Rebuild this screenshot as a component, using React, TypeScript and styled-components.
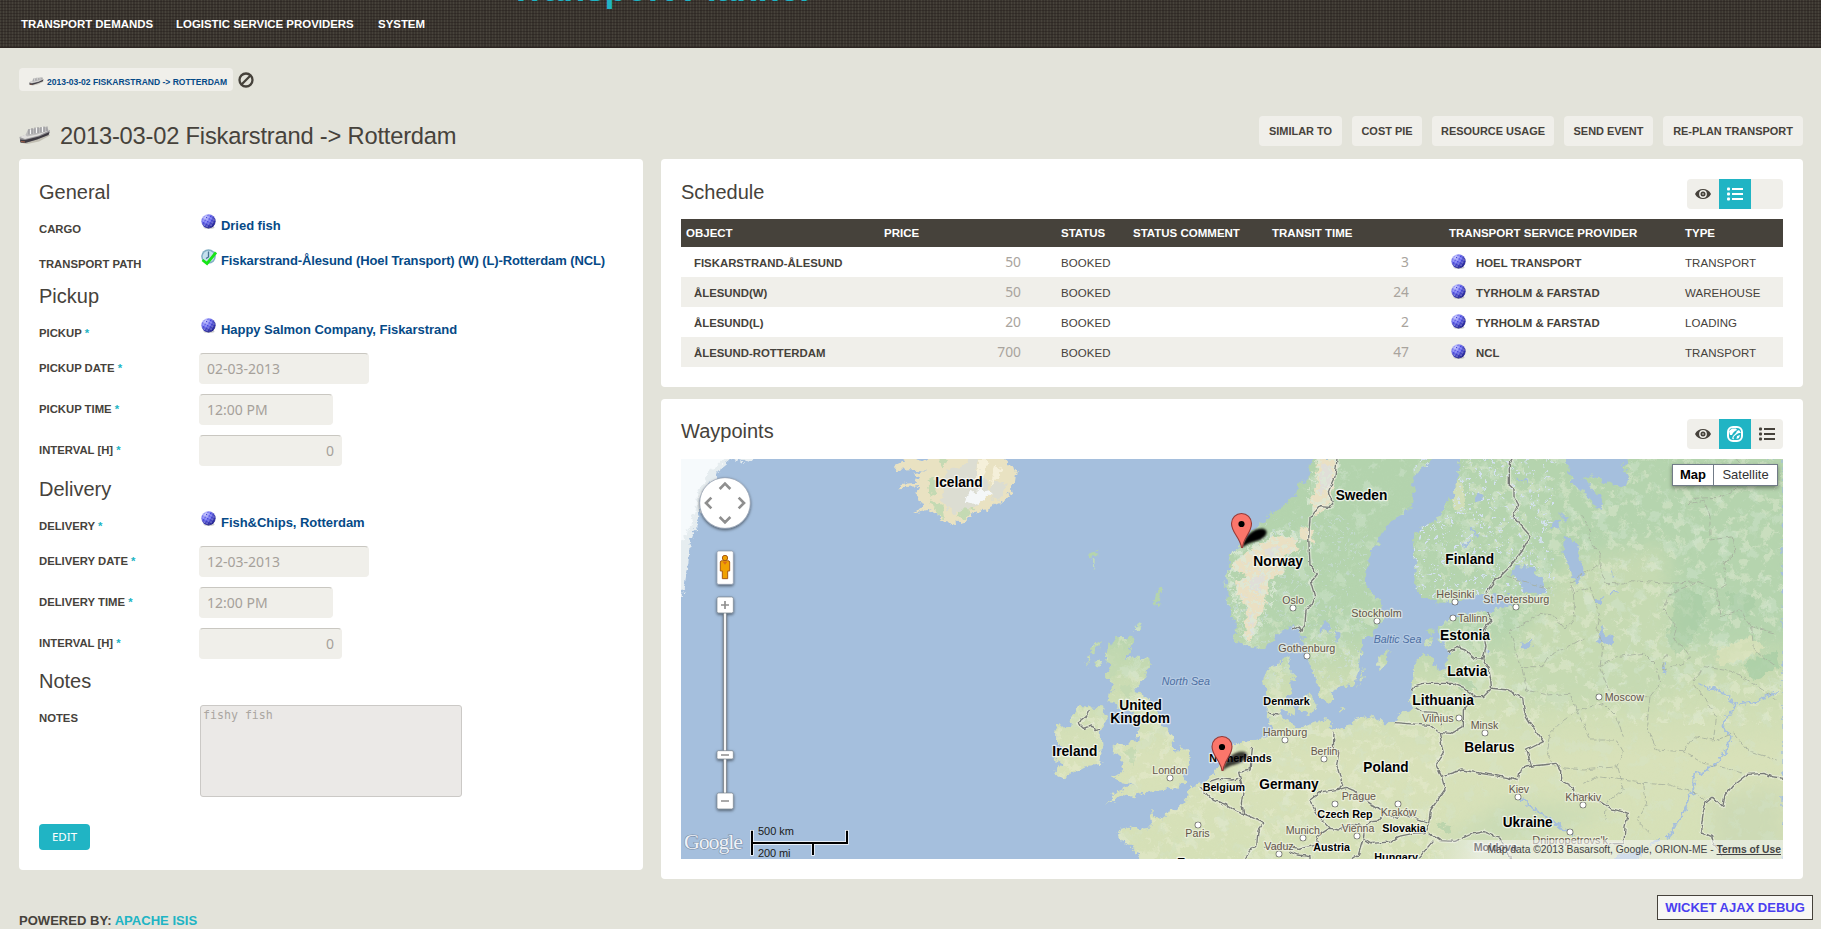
import React from 'react';
import styled, { createGlobalStyle } from 'styled-components';

const GlobalStyle = createGlobalStyle`
  * { box-sizing: border-box; }
  html, body { margin: 0; padding: 0; }
  body {
    background: #e3e3da;
    color: #46423b;
    font-family: "Liberation Sans", Arial, sans-serif;
    overflow: hidden;
  }
`;

const Page = styled.div`
  position: relative;
  width: 1821px;
  height: 929px;
  overflow: hidden;
`;

const Header = styled.header`
  position: relative;
  height: 48px;
  background-color: #3b3630;
  background-image:
    repeating-linear-gradient(0deg, rgba(30, 22, 20, 0.36) 0 1px, transparent 1px 3px),
    repeating-linear-gradient(90deg, rgba(100, 96, 84, 0.3) 0 1px, transparent 1px 3px),
    repeating-linear-gradient(90deg, rgba(20, 16, 14, 0.08) 0 3px, transparent 3px 7px);
  border-bottom: 1px solid #2d2622;
  overflow: hidden;
`;

const Brand = styled.div`
  position: absolute;
  left: 510px;
  top: -31px;
  font-size: 36px;
  line-height: 40px;
  font-weight: bold;
  letter-spacing: -0.3px;
  color: #20b4c4;
  white-space: nowrap;
`;

const Nav = styled.nav`
  display: flex;
  gap: 23px;
  padding: 16px 0 0 21px;
`;

const NavItem = styled.a<{ $w: number }>`
  width: ${(p) => p.$w}px;
  font-size: 11.45px;
  line-height: 16px;
  font-weight: bold;
  color: #fff;
  white-space: nowrap;
`;

const Crumbs = styled.div`
  display: flex;
  align-items: center;
  gap: 5px;
  padding: 20px 0 0 19px;
`;

const Crumb = styled.a`
  display: flex;
  align-items: center;
  gap: 3px;
  width: 214px;
  height: 23px;
  padding: 4px 0 0 10px;
  border-radius: 4px;
  background: #f0efea;
  color: #064a87;
  font-size: 8.52px;
  font-weight: bold;
  white-space: nowrap;
`;

const TitleBar = styled.div`
  display: flex;
  justify-content: space-between;
  height: 68px;
  padding: 25px 18px 0 19px;
`;

const Title = styled.h1`
  display: flex;
  gap: 9px;
  margin: 6px 0 0;
  font-size: 23.7px;
  letter-spacing: -0.2px;
  line-height: 28px;
  font-weight: normal;
  svg { margin-top: 4px; }
`;

const Actions = styled.div`
  display: flex;
  gap: 10px;
`;

const ActionButton = styled.button<{ $w: number }>`
  width: ${(p) => p.$w}px;
  height: 30px;
  padding: 0;
  border: 0;
  border-radius: 4px;
  background: #f0efea;
  color: #46423b;
  font: bold 10.95px/30px "Liberation Sans", Arial, sans-serif;
  white-space: nowrap;
`;

const Columns = styled.main`
  display: grid;
  grid-template-columns: 624px 1142px;
  column-gap: 18px;
  padding-left: 19px;
  align-items: start;
`;

const Panel = styled.section<{ $h: number; $top: number }>`
  height: ${(p) => p.$h}px;
  padding: ${(p) => p.$top}px 20px 0;
  border-radius: 4px;
  background: #fff;
`;

const RightColumn = styled.div`
  display: flex;
  flex-direction: column;
  gap: 12px;
`;

const Heading = styled.h2<{ $gap?: number; $line?: number }>`
  height: 34px;
  margin: ${(p) => p.$gap || 0}px 0 0;
  font-size: 20px;
  line-height: ${(p) => p.$line || 32}px;
  font-weight: normal;
`;

const Row = styled.div<{ $h: number }>`
  display: grid;
  grid-template-columns: 160px 1fr;
  height: ${(p) => p.$h}px;
`;

const Label = styled.label`
  padding-top: 11px;
  font-size: 11.3px;
  line-height: 16px;
  font-weight: bold;
  white-space: nowrap;
  span { color: #20b4c4; }
`;

const LinkValue = styled.a<{ $tight?: boolean }>`
  display: flex;
  gap: ${(p) => (p.$tight ? 4 : 5)}px;
  padding: 4px 0 0 2px;
  font-size: 13px;
  letter-spacing: ${(p) => (p.$tight ? '-0.11px' : '-0.04px')};
  line-height: 16px;
  font-weight: bold;
  color: #064a87;
  white-space: nowrap;
  span { padding-top: 4px; }
`;

const Field = styled.input<{ $w: number; $right?: boolean }>`
  width: ${(p) => p.$w}px;
  height: 31px;
  margin-top: 4px;
  padding: 0 7px;
  border: 1px solid #f0efea;
  border-top-color: #c9c7c1;
  border-radius: 4px;
  background: #f0efea;
  color: #a6a19a;
  text-align: ${(p) => (p.$right ? 'right' : 'left')};
  font: 14px/28px "Noto Sans", sans-serif;
`;

const Notes = styled.textarea`
  width: 262px;
  height: 92px;
  margin: 6px 0 0 1px;
  padding: 2px;
  border: 1px solid #cbc9c6;
  border-radius: 3px;
  background: #ebe9e7;
  color: #aaa6a1;
  resize: none;
  font: 11.6px/14px "DejaVu Sans Mono", monospace;
`;

const EditButton = styled.button`
  display: block;
  width: 51px;
  height: 26px;
  padding: 0;
  border: 0;
  border-radius: 4px;
  background: #20b4c4;
  color: #fff;
  font: 11.5px/26px "Noto Sans", sans-serif;
`;

const PanelHead = styled.div`
  display: flex;
  justify-content: space-between;
  height: 43px;
`;

const Toggle = styled.div`
  display: flex;
  width: 96px;
  height: 30px;
  margin-top: 3px;
  border-radius: 4px;
  background: #f0efea;
  overflow: hidden;
`;

const ToggleItem = styled.span<{ $on?: boolean }>`
  display: flex;
  align-items: center;
  justify-content: center;
  width: 32px;
  color: ${(p) => (p.$on ? '#fff' : '#46423b')};
  background: ${(p) => (p.$on ? '#20b4c4' : 'transparent')};
`;

const TableRow = styled.div<{ $kind?: 'head' | 'alt' }>`
  display: grid;
  grid-template-columns: 198px 177px 72px 139px 177px 236px 103px;
  height: ${(p) => (p.$kind === 'head' ? 28 : 30)}px;
  background: ${(p) => (p.$kind === 'head' ? '#46423b' : p.$kind === 'alt' ? '#f0efea' : '#fff')};
`;

const HeadCell = styled.div`
  padding-left: 5px;
  font-size: 11.5px;
  line-height: 28px;
  font-weight: bold;
  color: #fff;
  white-space: nowrap;
`;

const Cell = styled.div<{ $bold?: boolean; $pad?: number }>`
  display: flex;
  gap: 10px;
  padding: 1px 0 0 ${(p) => p.$pad ?? 5}px;
  font-size: ${(p) => (p.$bold ? 11.38 : 11.5)}px;
  line-height: ${(p) => (p.$bold ? 31 : 30)}px;
  letter-spacing: ${(p) => (p.$bold ? 'normal' : '0.05px')};
  font-weight: ${(p) => (p.$bold ? 'bold' : 'normal')};
  white-space: nowrap;
  svg { margin-top: 6px; }
`;

const NumberCell = styled.div`
  padding-right: 35px;
  text-align: right;
  color: #a9a49d;
  font: 13.8px/29px "Noto Sans", sans-serif;
`;

const MapFrame = styled.div`
  position: relative;
  width: 1102px;
  height: 400px;
  overflow: hidden;
  background: #a5bfdd;
`;

const MapType = styled.div`
  position: absolute;
  top: 5px;
  right: 5px;
  display: flex;
  width: 106px;
  height: 22px;
  border: 1px solid #717b87;
  background: #fff;
  box-shadow: 0 2px 4px rgba(0, 0, 0, 0.4);
  font-size: 13px;
  line-height: 19px;
  text-align: center;
  color: #333;
  b { width: 41px; border-right: 1px solid #717b87; color: #000; }
  span { flex: 1; }
`;

const Attribution = styled.div`
  position: absolute;
  right: 0;
  bottom: 0;
  width: 355px;
  height: 19px;
  padding-right: 2px;
  background: linear-gradient(90deg, rgba(245, 245, 245, 0), rgba(245, 245, 245, 0.55) 50px);
  font-size: 10.3px;
  line-height: 19px;
  text-align: right;
  color: #444;
  white-space: nowrap;
  b { text-decoration: underline; }
`;

const Footer = styled.footer`
  margin-top: -9px;
  padding: 42px 0 0 19px;
  font-size: 13.05px;
  line-height: 17px;
  font-weight: bold;
  a { color: #20b4c4; }
`;

const DebugLink = styled.a`
  position: absolute;
  right: 8px;
  bottom: 9px;
  width: 156px;
  height: 25px;
  border: 1px solid #46423b;
  background: #f7f7f4;
  color: #4a3ff0;
  font-size: 13px;
  line-height: 23px;
  font-weight: bold;
  text-align: center;
  white-space: nowrap;
`;

const Ship = ({ w }: { w: number }) => (
  <svg width={w} height={(w * 18) / 32} viewBox="0 0 32 18">
    <path d="M1 16.500 L30 8.500 L31 9.500 L20 15.500 L8 18Z" fill="#a5a091" opacity=".55" />
    <path d="M.5 11 L8 8.500 L26 4.500 L31 4 L30 8.500 L18 13.500 L6 17 L1.500 16.500 Z" fill="#98979a" />
    <path d="M1 13.500 L6 14 L20 10.500 L30.500 6 L29.500 9 L18 13.500 L6 17 L1.500 16.500Z" fill="#3f3b42" />
    <path d="M.5 11 L8 8 L28 4 L31 4 L20 9.500 L6 13Z" fill="#e0dedc" />
    <path d="M6.500 9 L9 3.500 L27 .8 L30 4.500 L18 8.500 L8 10.500Z" fill="#bdbcbc" />
    <path d="M10 8.500 V3 M13 8 V2 M16 7.500 V1.500 M19 7 V1 M22 6.500 V1 M25 6 V.5 M28 5 V.5" stroke="#8d8d92" strokeWidth="1" />
    <path d="M11.500 8 V3.500 M17.500 7 V2 M23.500 6 V1" stroke="#f6f6f6" strokeWidth="1.200" />
    <path d="M2 15.500 L6 16" stroke="#a8644a" strokeWidth="1.200" />
  </svg>
);

const Ball = () => (
  <svg width="15" height="15" viewBox="0 0 15 15">
    <defs>
      <radialGradient id="ball" cx="30%" cy="22%" r="82%">
        <stop offset="0" stopColor="#d6d6ff" />
        <stop offset=".45" stopColor="#7474f2" />
        <stop offset="1" stopColor="#1b1b7c" />
      </radialGradient>
      <pattern id="net" width="3" height="3" patternUnits="userSpaceOnUse" patternTransform="rotate(28)">
        <rect width="1.200" height="1.200" fill="#2424cc" />
        <rect x="1.500" y="1.500" width="1.300" height="1.300" fill="#b9b9ff" opacity=".9" />
      </pattern>
    </defs>
    <ellipse cx="8" cy="13.600" rx="5.500" ry="1.300" fill="#999" opacity=".5" />
    <circle cx="7.500" cy="7.300" r="7.100" fill="url(#ball)" />
    <circle cx="7.500" cy="7.300" r="6.500" fill="url(#net)" opacity=".8" />
  </svg>
);

const ClockCheck = () => (
  <svg width="16" height="17" viewBox="0 0 16 17">
    <circle cx="7.500" cy="7.500" r="7.300" fill="#82afc4" />
    <circle cx="7.500" cy="7.500" r="5.800" fill="#c5e0ee" />
    <path d="M7.500 2.500 V8 L5 9.500" fill="none" stroke="#44718f" strokeWidth="1.300" />
    <path d="M1.500 11 L6 14.500 L15 3.500" fill="none" stroke="#16e416" strokeWidth="2.800" />
  </svg>
);

const Ban = () => (
  <svg width="16" height="16" viewBox="0 0 16 16" fill="none" stroke="#46423b" strokeWidth="2.300">
    <circle cx="8" cy="8" r="6.500" />
    <path d="M3.500 12.500 L12.500 3.500" />
  </svg>
);

const Eye = () => (
  <svg width="16" height="12" viewBox="0 0 16 12">
    <path d="M0 6 C3 -.8 13 -.8 16 6 C13 12.800 3 12.800 0 6Z" fill="#46423b" />
    <circle cx="8" cy="6" r="3.900" fill="#f0efea" />
    <circle cx="8" cy="6" r="2.500" fill="#46423b" />
    <circle cx="8" cy="6" r=".8" fill="#f0efea" />
  </svg>
);

const ListIcon = () => (
  <svg width="16" height="14" viewBox="0 0 16 14" fill="currentColor">
    {[0.5, 5.5, 10.5].map((y) => (
      <g key={y}>
        <rect x="0" y={y} width="3" height="3" rx="1" />
        <rect x="5" y={y + 0.5} width="11" height="2" />
      </g>
    ))}
  </svg>
);

const GlobeIcon = () => (
  <svg width="16" height="16" viewBox="0 0 16 16">
    <rect x="1" y="1" width="14" height="14" rx="5" fill="none" stroke="#fff" strokeWidth="2" />
    <path d="M2 5 L5 2.500 L9 2.500 L10 4 L8 5 L6 7 L5 9 L3 9Z M10 5 L12 4 L14 7 L12 7 L10 8 L8 9.500 L6.500 11 L7 13.500 L5 12.500 L6 10 L9 7Z M10 10 L13 9 L12 12 L9.500 13Z" fill="#fff" />
  </svg>
);

const MAINLAND =
  'M2200 20 L2200 1240 L280 1240 L250 1195 L212 1175 L200 1140 L240 1130 L272 1138 L308 1130 L300 1082 L316 1100 L342 1106 L346 1086 L386 1075 L415 1040 L418 1012 L450 1004 L474 988 L492 974 L515 930 L540 892 L562 880 L605 868 L640 862 L670 850 L665 826 L650 800 L655 770 L645 740 L640 690 L650 658 L680 647 L700 628 L722 618 L718 665 L737 680 L720 700 L725 725 L708 745 L725 765 L690 782 L700 808 L718 820 L735 838 L762 830 L792 820 L825 808 L850 815 L835 832 L862 840 L892 825 L932 802 L962 797 L1000 817 L1035 815 L1050 790 L1082 788 L1085 700 L1090 660 L1102 630 L1130 612 L1150 630 L1165 662 L1190 660 L1197 610 L1190 582 L1170 575 L1165 535 L1178 520 L1210 502 L1250 495 L1290 485 L1320 488 L1350 472 L1395 468 L1385 438 L1335 435 L1300 428 L1260 440 L1215 455 L1170 458 L1120 440 L1102 418 L1094 395 L1100 365 L1092 315 L1086 280 L1098 250 L1120 232 L1155 212 L1180 175 L1205 140 L1225 90 L1225 20Z';
const SCANDINAVIA =
  'M798 20 L776 48 L782 80 L742 106 L738 132 L700 168 L665 192 L640 217 L612 240 L592 264 L568 288 L540 312 L530 332 L542 352 L526 385 L532 420 L534 468 L546 500 L560 528 L553 560 L576 585 L612 597 L642 590 L668 570 L692 546 L716 532 L734 522 L748 542 L752 562 L768 592 L776 640 L792 676 L806 702 L808 745 L832 760 L850 750 L848 722 L872 708 L910 712 L926 655 L932 600 L940 566 L968 558 L986 528 L1006 506 L988 450 L952 412 L948 380 L956 322 L990 262 L1016 222 L1052 196 L1084 172 L1092 130 L1086 100 L1108 60 L1155 20Z';
const BRITAIN =
  'M192 562 L252 560 L245 592 L225 620 L298 626 L300 650 L272 700 L250 725 L275 730 L315 765 L330 810 L362 850 L372 880 L372 905 L400 902 L422 915 L418 950 L395 975 L410 992 L380 1015 L320 1022 L280 1030 L250 1042 L225 1035 L172 1062 L200 1025 L250 1005 L215 1000 L186 980 L222 960 L208 920 L185 905 L195 885 L240 880 L262 870 L268 830 L245 800 L250 780 L215 790 L200 760 L172 755 L190 700 L165 680 L180 650 L165 620Z';
const IRELAND =
  'M66 800 L90 768 L155 772 L170 800 L160 830 L152 850 L155 900 L150 942 L100 950 L40 985 L12 970 L40 945 L8 920 L45 895 L18 870 L20 830 L60 828Z';
const ISLANDS =
  'M120 600 L150 566 L145 595 L130 612Z M108 620 L120 612 L115 655Z M133 630 L150 628 L156 650 L140 648Z M320 425 L334 410 L330 450 L318 472 L308 448Z M262 515 L275 520 L262 545 L248 540Z M108 312 L145 302 L138 318 L115 322Z M125 325 L134 330 L132 365Z M985 625 L1022 600 L1000 645 L985 665Z M925 710 L945 645 L940 680Z M742 762 L780 730 L800 765 L782 795 L750 782Z M730 770 L700 775 L712 795 L738 790Z M865 770 L880 778 L872 785Z M1118 575 L1150 560 L1148 580 L1120 588Z M1128 540 L1148 535 L1145 552Z M700 715 L715 705 L712 730Z M385 895 L412 900 L420 915 L400 920Z';
const LAND = [MAINLAND, SCANDINAVIA, BRITAIN, IRELAND, ISLANDS].join(' ');

const BORDERS = [
  'M862 20 L855 80 L835 125 L848 160 L840 172 L808 170 L780 205 L776 262 L780 345 L802 372 L782 398 L794 440 L785 468 L768 480 L765 525 L755 542 L745 528 L726 540',
  'M1390 20 L1378 40 L1378 105 L1392 118 L1392 140 L1406 165 L1388 195 L1412 225 L1440 258 L1418 300 L1380 350 L1330 400 L1308 430',
  'M1315 490 L1325 510 L1300 540 L1308 590 L1298 628 L1272 625 L1245 600 L1222 592 L1196 605',
  'M1298 628 L1318 662 L1325 715 L1300 740 L1275 740 L1240 712 L1210 700 L1120 700 L1098 708 L1085 722',
  'M1325 715 L1375 720 L1418 745 L1425 795 L1450 835 L1480 875 L1430 900 L1445 948 L1412 955 L1404 992 L1370 982 L1305 972 L1235 960 L1170 980',
  'M1445 948 L1475 945 L1518 940 L1532 965 L1532 990 L1570 1010 L1572 1030 L1650 1055 L1680 1075 L1735 1090 L1725 1130 L1722 1180 L1668 1182',
  'M1275 740 L1240 780 L1240 830 L1205 850 L1168 848',
  'M1035 818 L1140 826 L1168 848 L1180 910 L1158 945 L1175 980 L1185 1018 L1142 1080 L1136 1118 L1058 1090 L1040 1105 L1005 1090 L960 1060 L938 1045 L912 1022 L888 1012 L868 1018 L876 1000 L860 945 L866 910 L850 895 L852 845',
  'M1095 772 L1115 785 L1160 788 L1175 825',
  'M608 886 L600 960 L566 968 L580 1020 L574 1060 L582 1092 L642 1118 L624 1142 L620 1190 L598 1200 L580 1240',
  'M480 995 L510 985 L545 990 L565 985 M450 1010 L485 1048 L530 1065 L560 1085 L582 1092',
  'M868 1018 L815 1025 L780 1052 L800 1090 L838 1135 L868 1140 L905 1122 L945 1128 L965 1112 L985 1110 L1005 1090',
  'M838 1135 L800 1160 L806 1180 L745 1195 L720 1190 L640 1192 M945 1128 L940 1165 L965 1180 L1020 1176 L1042 1160 L1090 1150 L1125 1148 L1136 1118',
  'M940 1165 L925 1215 L890 1240 M1136 1148 L1170 1172 L1215 1174 L1265 1152 L1302 1145 L1350 1165 L1375 1210 L1390 1240 M1150 1172 L1105 1225',
  'M655 790 L685 795 M118 780 L108 800 L84 820 L100 835 L128 825 L135 842 L150 838',
  'M2200 985 L2165 980 L2145 970 L2092 973 L2050 1005 L2025 1035 L2018 1072 L1988 1042 L1968 1058 L1960 1085 L1952 1145 L1985 1160 L1990 1180 L2020 1215',
  'M720 1205 L745 1215 L780 1220 L780 1240',
];

const REGIONS = [
  'M1594 190 L1620 240 L1615 262 L1650 310 L1650 345 L1600 370 L1560 398 L1570 430 L1575 500 L1545 540 L1508 495 L1470 490 L1425 520 L1380 540 L1395 600 L1415 650 L1430 720 L1490 735',
  'M1415 650 L1480 650 L1500 615 L1555 590 L1600 565 M1650 345 L1665 400 L1720 402 L1740 392 L1860 400 L1945 395 L2000 420 L2030 400 L2020 340 L2055 310 L2050 260 L1980 270 L1980 200 L1960 150 L1915 165 L1930 145 L2010 142 L2050 120 L2090 90 L2060 20',
  'M1570 430 L1620 410 L1650 500 L1640 545 L1660 590 L1650 650 L1672 700 L1682 740 L1800 740 L1830 700 L1820 650 L1780 610 L1700 620 L1650 650',
  'M1850 610 L1835 660 L1900 640 L1920 620 L1900 590 L1870 570 L1880 530 L1840 480 L1860 430 L1945 395',
  'M1490 735 L1560 730 L1580 780 L1530 820 L1500 850 L1490 900 L1510 950 L1600 960 L1700 950 L1720 905 L1700 870 L1620 870 L1600 820 L1580 780 L1660 760 L1700 800 L1720 860',
  'M1800 740 L1790 830 L1820 900 L1900 905 L1960 940 L2010 950 L2080 970 M1900 905 L1930 860 L1990 870 L2000 800 L1960 740 L1930 700 L1960 650 L2050 665 L2110 700 L2180 750',
  'M1600 1000 L1640 980 L1720 990 L1780 1000 L1860 1005 L1940 1030 L1975 1060 M1700 950 L1720 1020 L1670 1060 L1665 1110 M1780 1000 L1790 1060 L1760 1110 L1800 1150 M1367 378 L1460 405 L1500 415',
  'M2105 530 L2070 480 L2010 500 L2000 420 M2105 530 L2180 550 M2105 530 L2110 600 L2180 650 M2000 870 L2050 850 L2090 900 L2180 930',
];

const LAKES =
  'M1545 20 L1560 75 L1570 110 L1610 130 L1630 165 L1655 180 L1660 150 L1625 118 L1600 85 L1620 75 L1670 95 L1720 115 L1740 80 L1720 55 L1735 20Z M1398 345 L1440 350 L1478 385 L1487 425 L1450 435 L1420 425 L1410 395 L1388 375Z M1545 260 L1580 278 L1592 330 L1602 365 L1585 405 L1565 385 L1560 345 L1540 310Z M1650 525 L1670 555 L1690 560 L1688 590 L1660 580 L1640 575Z M1635 445 L1660 445 L1655 460 L1635 458Z M1410 580 L1445 572 L1445 590 L1420 592Z M1510 215 L1530 220 L1525 238 L1505 232Z M1280 130 L1295 135 L1292 152 L1278 150Z M1305 585 L1320 605 L1310 615Z M1685 360 L1695 380 L1685 385Z M820 508 L840 520 L835 550 L815 540Z M858 540 L870 555 L860 580Z M1530 185 L1550 205 L1545 220Z M1725 1210 L1830 1175 L1830 1160 L1800 1180 L1760 1230 L1650 1240Z M750 555 L765 560 L762 575Z';

const RIVERS =
  'M2180 725 L2140 745 L2110 755 L2060 760 L2030 800 L2020 830 L2045 860 L2030 900 L1990 950 L1930 980 L1930 1020 L1895 1100 L1850 1165 M1940 700 L1990 715 L2035 740 L2050 765 M1410 1040 L1450 1075 L1490 1100 L1530 1130 L1570 1155 M1840 640 L1845 670 M1260 230 L1280 260 M1240 290 L1262 275 M1400 85 L1430 95 M1680 430 L1700 425';

type LabelSpec = [string, number, number, number];

const COUNTRIES: LabelSpec[] = [
  ['Iceland', -344, -202, 112],
  ['Sweden', 857, 1012, 150],
  ['Norway', 610, 759, 348],
  ['United', 208, 336, 780],
  ['Kingdom', 181, 360, 819],
  ['Ireland', 7, 142, 918],
  ['Germany', 628, 806, 1017],
  ['Poland', 940, 1076, 966],
  ['Finland', 1186, 1332, 342],
  ['Estonia', 1170, 1320, 570],
  ['Latvia', 1192, 1312, 678],
  ['Lithuania', 1087, 1272, 765],
  ['Belarus', 1243, 1394, 906],
  ['Ukraine', 1358, 1508, 1131],
  ['France', 381, 510, 1254],
];

const SMALL_COUNTRIES: LabelSpec[] = [
  ['Denmark', 640, 779, 765],
  ['Netherlands', 478, 665, 935],
  ['Belgium', 458, 585, 1022],
  ['Czech Rep', 802, 968, 1103],
  ['Slovakia', 997, 1127, 1145],
  ['Austria', 790, 900, 1202],
  ['Hungary', 973, 1104, 1232],
  ['Moldova', 1271, 1401, 1202],
];

const CITIES: [string, number, number, number, number, number][] = [
  ['Oslo', 697, 762, 462, 729, 474],
  ['Stockholm', 904, 1055, 500, 981, 513],
  ['Gothenburg', 685, 856, 606, 771, 618],
  ['Hamburg', 638, 772, 858, 705, 870],
  ['Berlin', 782, 862, 914, 822, 927],
  ['London', 307, 412, 971, 360, 984],
  ['Paris', 406, 479, 1160, 444, 1125],
  ['Prague', 875, 978, 1050, 855, 1062],
  ['Kraków', 992, 1100, 1097, 1044, 1062],
  ['Munich', 707, 810, 1151, 759, 1164],
  ['Vienna', 875, 973, 1145, 921, 1158],
  ['Vaduz', 643, 731, 1200, 687, 1212],
  ['Helsinki', 1159, 1273, 444, 1215, 456],
  ['St Petersburg', 1300, 1498, 459, 1398, 471],
  ['Tallinn', 1224, 1313, 516, 1209, 504],
  ['Vilnius', 1116, 1211, 816, 1227, 804],
  ['Minsk', 1262, 1345, 837, 1305, 849],
  ['Moscow', 1664, 1782, 753, 1647, 741],
  ['Kiev', 1376, 1437, 1029, 1404, 1041],
  ['Kharkiv', 1546, 1653, 1053, 1599, 1065],
  ["Dnipropetrovs'k", 1447, 1674, 1182, 1560, 1146],
];

const SEAS: LabelSpec[] = [
  ['North Sea', 335, 480, 705],
  ['Baltic Sea', 971, 1114, 579],
];

const MapLabels = styled.g<{ $size: number; $color: string; $bold?: boolean; $italic?: boolean; $halo: string }>`
  font-family: "Liberation Sans", Arial, sans-serif;
  font-size: ${(p) => p.$size}px;
  font-weight: ${(p) => (p.$bold ? 'bold' : 'normal')};
  font-style: ${(p) => (p.$italic ? 'italic' : 'normal')};
  fill: ${(p) => p.$color};
  stroke: ${(p) => p.$halo};
  stroke-width: 2.5px;
  stroke-linejoin: round;
  paint-order: stroke;
`;

const CityDot = styled.circle`
  fill: #fff;
  stroke: #444;
  stroke-width: 1.2px;
`;

const MapSvg = styled.svg`
  display: block;
`;

const Watermark = styled.text`
  font-family: "Liberation Serif", serif;
  font-size: 22px;
  fill: #eef2f7;
  stroke: #7d90a9;
  stroke-width: 1.2px;
  paint-order: stroke;
`;

const px = (v: number) => 369 + v / 3;
const py = (v: number) => v / 3 - 9;

const MapText = ({ spec: [text, x1, x2, y] }: { spec: LabelSpec }) => (
  <text x={px(x1)} y={py(y)} textLength={(x2 - x1) / 3} lengthAdjust="spacingAndGlyphs">{text}</text>
);

const Pin = ({ x, y, soft }: { x: number; y: number; soft?: boolean }) => (
  <g transform={`translate(${x} ${y})`}>
    <path d="M0 0 C2 -10 10 -19 20 -19 C28 -18 25 -10 16 -7 C9 -5 6 -4 0 0Z" fill="#000" opacity={soft ? 0.75 : 1} filter="url(#soft)" />
    <path d="M-.5 0 C-2 -10 -10.500 -15 -10.500 -24 A10 10 0 0 1 9.500 -24 C9.500 -15 1.500 -10 .5 0Z" fill="#fb766b" stroke="#963a37" strokeWidth="1.100" />
    <circle cx="-.5" cy="-23.500" r="3.100" fill="#000" />
  </g>
);

const EuropeMap = () => (
  <MapSvg width="1102" height="400" viewBox="0 0 1102 400">
    <defs>
      <linearGradient id="landTone" x1="0" y1="20" x2="0" y2="1230" gradientUnits="userSpaceOnUse">
        <stop offset="0" stopColor="#b3d3ad" />
        <stop offset=".42" stopColor="#b5d4ae" />
        <stop offset=".56" stopColor="#cbdcb3" />
        <stop offset=".75" stopColor="#d8e1b9" />
        <stop offset="1" stopColor="#d5e0b7" />
      </linearGradient>
      <filter id="coast" x="-2%" y="-2%" width="104%" height="104%">
        <feTurbulence type="fractalNoise" baseFrequency=".055" numOctaves="3" seed="4" result="n" />
        <feDisplacementMap in="SourceGraphic" in2="n" scale="28" xChannelSelector="R" yChannelSelector="G" />
      </filter>
      <filter id="wobble" x="-5%" y="-5%" width="110%" height="110%">
        <feTurbulence type="fractalNoise" baseFrequency=".05" numOctaves="2" seed="9" result="n" />
        <feDisplacementMap in="SourceGraphic" in2="n" scale="14" xChannelSelector="R" yChannelSelector="G" />
      </filter>
      <filter id="mottleGreen" x="0" y="0" width="100%" height="100%">
        <feTurbulence type="fractalNoise" baseFrequency=".022" numOctaves="5" seed="12" />
        <feColorMatrix values="0 0 0 0 .66  0 0 0 0 .8  0 0 0 0 .65  0 8 0 0 -4.5" />
      </filter>
      <filter id="mottlePale" x="0" y="0" width="100%" height="100%">
        <feTurbulence type="fractalNoise" baseFrequency=".03" numOctaves="5" seed="31" />
        <feColorMatrix values="0 0 0 0 .87  0 0 0 0 .89  0 0 0 0 .73  0 8 0 0 -4.4" />
      </filter>
      <filter id="rocky" x="0" y="0" width="100%" height="100%">
        <feTurbulence type="fractalNoise" baseFrequency=".06" numOctaves="4" seed="8" />
        <feColorMatrix values="0 0 0 0 .72  0 0 0 0 .82  0 0 0 0 .68  0 12 0 0 -6.200" />
      </filter>
      <filter id="ponds" x="0" y="0" width="100%" height="100%">
        <feTurbulence type="fractalNoise" baseFrequency=".09" numOctaves="3" seed="5" />
        <feColorMatrix values="0 0 0 0 .65  0 0 0 0 .75  0 0 0 0 .87  0 14 0 0 -9.1" />
      </filter>
      <filter id="soft"><feGaussianBlur stdDeviation=".9" /></filter>
      <filter id="spread" x="-30%" y="-30%" width="160%" height="160%"><feGaussianBlur stdDeviation="28" /></filter>
      <filter id="drop" x="-30%" y="-20%" width="160%" height="150%">
        <feDropShadow dx="0" dy="4" stdDeviation="4" floodColor="#000" floodOpacity=".55" />
      </filter>
      <clipPath id="landClip"><path d={LAND} /></clipPath>
      <clipPath id="fjellClip">
        <path d="M790 20 L870 20 L850 120 L830 180 L795 200 L770 150Z M530 300 L670 240 L760 240 L760 300 L710 330 L660 480 L620 580 L580 570 L540 430Z" />
      </clipPath>
    </defs>

    <g transform="translate(-11 -9) scale(.33333)">
      <g filter="url(#coast)">
        <path d="M20 10 L270 10 L225 38 L185 25 L150 55 L135 90 L110 110 L95 150 L85 215 L75 235 L60 275 L55 340 L45 380 L35 440 L20 440Z" fill="#e6edf0" />
        <path d="M20 10 L180 10 L140 50 L115 70 L90 120 L75 190 L50 250 L20 290Z" fill="#f6fafc" />
        <path d="M672 52 L705 35 L690 10 L770 30 L800 10 L1000 10 L1005 35 L1040 60 L1035 95 L1008 150 L975 165 L950 178 L910 190 L890 212 L862 222 L825 215 L795 190 L770 180 L728 188 L760 168 L735 130 L752 108 L690 112 L700 98 L745 95 L735 75 L765 62 L720 58 L680 60Z" fill="#e9e2c2" />
        <path d="M830 60 L900 40 L950 90 L960 130 L920 170 L850 195 L815 150Z M900 20 L925 20 L915 80 L890 60Z M970 95 L1010 100 L990 150 L960 145Z" fill="#dcddd2" />
        <path d="M780 150 L820 165 L825 205 L800 195Z M880 175 L910 180 L890 205 L865 205Z M770 90 L795 80 L800 130 L780 135Z M800 20 L825 20 L820 60Z" fill="#c4dab3" />
        <path d="M885 145 L895 125 L960 118 L965 130 L925 165 L890 155Z" fill="#f4f7f8" />
        <path d="M925 30 L955 30 L940 85 L920 90Z M975 50 L995 60 L960 110Z" fill="#f5f0da" />
      </g>
    </g>

    <g transform="translate(369 -9) scale(.33333)">
      <g filter="url(#coast)">
        <path d={LAND} fill="url(#landTone)" />
        <g clipPath="url(#landClip)">
          <path d="M1250 20 L2200 20 L2200 560 L1900 560 L1400 500 L1230 350Z" fill="#b5d4ae" filter="url(#spread)" />
          <path d="M1550 330 L1850 280 L1880 600 L2000 620 L1800 760 L1400 760 L1400 560Z" fill="#c6dab2" filter="url(#spread)" />
          <path d="M1380 1050 L1700 1080 L1400 1180 L1150 1190Z" fill="#cadbb5" filter="url(#spread)" />
          <path d="M1980 1050 L2200 1000 L2200 1240 L2000 1240Z" fill="#cddab5" filter="url(#spread)" />
          <rect x="1180" y="20" width="1020" height="800" filter="url(#mottlePale)" opacity=".34" />
          <rect x="0" y="480" width="1180" height="760" filter="url(#mottlePale)" opacity=".3" />
          <rect x="0" y="20" width="2200" height="700" filter="url(#mottleGreen)" opacity=".4" />
          <rect x="0" y="720" width="2200" height="520" filter="url(#mottleGreen)" opacity=".24" />
          <path d="M1870 400 L1950 430 L1970 500 L1930 560 L1880 620 L1850 560 L1870 500Z M2030 420 L2120 440 L2100 500 L2050 510Z M1170 670 L1240 680 L1290 720 L1240 720Z M1150 1120 L1210 1130 L1200 1155Z" fill="#a3caa2" opacity=".5" />
          <path d="M2080 640 L2180 600 L2190 650 L2110 690Z" fill="#a9cea6" opacity=".8" />
          <path d="M2000 600 L2100 560 L2150 590 L2080 630 L2000 650Z M1200 90 L1240 100 L1250 170 L1210 180Z" fill="#dde3bb" opacity=".7" />
          <path d="M800 20 L860 20 L850 120 L830 180 L795 200 L780 150 L800 100Z M600 300 L670 262 L745 265 L740 300 L700 320 L700 370 L655 390 L650 470 L620 510 L605 570 L585 560 L588 470 L560 430 L555 395 L590 380 L545 350Z M750 230 L790 240 L790 280 L755 262Z" fill="#eae0c3" />
          <path d="M810 40 L850 50 L835 120 L810 130Z M600 385 L640 370 L630 420 L600 420Z M640 300 L690 285 L660 330Z M595 500 L610 480 L605 550Z" fill="#e0ded8" />
          <g clipPath="url(#fjellClip)">
            <rect x="500" y="20" width="400" height="580" filter="url(#rocky)" opacity=".75" />
          </g>
          <path d="M172 600 L220 590 L210 660 L180 690Z M205 710 L240 700 L240 760Z M225 900 L260 890 L250 950Z" fill="#c2d8b2" opacity=".8" />
          <rect x="1090" y="20" width="420" height="420" filter="url(#ponds)" />
          <rect x="530" y="200" width="420" height="500" filter="url(#ponds)" opacity=".4" />
        </g>
        <path d={LAKES} fill="#a5bfdd" />
        <path d={RIVERS} fill="none" stroke="#a5bfdd" strokeWidth="6" />
      </g>
      <g filter="url(#wobble)" fill="none" strokeLinejoin="round">
        <g stroke="#a6b09e" strokeWidth="2.500" strokeDasharray="20 6">
          {REGIONS.map((d) => <path key={d} d={d} />)}
        </g>
        <g stroke="#eef1e4" strokeWidth="11" opacity=".6">
          {BORDERS.map((d) => <path key={d} d={d} />)}
        </g>
        <g stroke="#777a77" strokeWidth="4">
          {BORDERS.map((d) => <path key={d} d={d} />)}
        </g>
      </g>
    </g>

    <MapLabels $size={11} $color="#64554a" $halo="rgba(240,243,228,.7)">
      {CITIES.map(([name, x1, x2, y, cx, cy]) => (
        <g key={name}>
          <CityDot cx={px(cx)} cy={py(cy)} r="2.700" />
          <MapText spec={[name, x1, x2, y]} />
        </g>
      ))}
    </MapLabels>
    <MapLabels $size={11} $color="#4d6fa3" $italic $halo="rgba(190,208,230,.6)">
      {SEAS.map((s) => <MapText key={s[0]} spec={s} />)}
    </MapLabels>
    <MapLabels $size={14} $color="#000" $bold $halo="rgba(255,255,255,.7)">
      {COUNTRIES.map((s) => <MapText key={s[0]} spec={s} />)}
    </MapLabels>
    <MapLabels $size={11.5} $color="#000" $bold $halo="rgba(255,255,255,.7)">
      {SMALL_COUNTRIES.map((s) => <MapText key={s[0]} spec={s} />)}
    </MapLabels>

    <Pin x={561} y={88.5} />
    <Pin x={541.5} y={311.5} soft />

    <g transform="translate(-11 -9) scale(.33333)">
      <g filter="url(#drop)">
        <circle cx="165" cy="159" r="76" fill="#fff" stroke="#8693a5" strokeWidth="2" />
        <rect x="141" y="303" width="49" height="100" rx="5" fill="#fff" stroke="#8693a5" strokeWidth="2" />
        <rect x="161" y="488" width="8" height="545" fill="#fff" stroke="#7a8087" strokeWidth="2.500" />
        <rect x="141" y="441" width="49" height="48" rx="5" fill="#fff" stroke="#717b87" strokeWidth="2" />
        <rect x="141" y="902" width="49" height="25" rx="4" fill="#fff" stroke="#717b87" strokeWidth="2" />
        <rect x="141" y="1029" width="49" height="48" rx="5" fill="#fff" stroke="#717b87" strokeWidth="2" />
      </g>
      <g fill="none" stroke="#8f8f8f" strokeWidth="8">
        <path d="M149 117 L165 101 L181 117 M149 201 L165 217 L181 201 M124 143 L108 159 L124 175 M206 143 L222 159 L206 175" />
        <path d="M153 465 H177 M165 453 V477 M153 915 H177 M153 1053 H177" strokeWidth="5" />
      </g>
      <g fill="#f0a202" stroke="#a85a16" strokeWidth="3">
        <path d="M151 336 Q151 332 157 332 H173 Q179 332 179 336 V363 H173 V386 H157 V363 H151Z" />
        <circle cx="165" cy="324" r="8" />
        <path d="M158 335 L165 344 L172 335Z" fill="#d96b1c" stroke="none" />
      </g>
      <path d="M246 1140 V1217 M246 1179 H536 M531 1140 V1182 M429 1179 V1217" fill="none" stroke="#fff" strokeWidth="10" />
      <path d="M246 1142 V1215 M246 1179 H534 M531 1142 V1182 M429 1179 V1215" fill="none" stroke="#000" strokeWidth="6" />
    </g>
    <g fontFamily="Liberation Sans, Arial, sans-serif" fontSize="11" fill="#1a1a1a">
      <text x="77" y="376" textLength="36">500 km</text>
      <text x="77" y="398" textLength="32.500">200 mi</text>
    </g>
    <Watermark x="3" y="390" textLength="59">Google</Watermark>
  </MapSvg>
);

const SCHEDULE = [
  ['FISKARSTRAND-ÅLESUND', '50', '3', 'HOEL TRANSPORT', 'TRANSPORT'],
  ['ÅLESUND(W)', '50', '24', 'TYRHOLM & FARSTAD', 'WAREHOUSE'],
  ['ÅLESUND(L)', '20', '2', 'TYRHOLM & FARSTAD', 'LOADING'],
  ['ÅLESUND-ROTTERDAM', '700', '47', 'NCL', 'TRANSPORT'],
];

const HEADINGS = ['OBJECT', 'PRICE', 'STATUS', 'STATUS COMMENT', 'TRANSIT TIME', 'TRANSPORT SERVICE PROVIDER', 'TYPE'];

const LinkRow = ({ label, value, required, icon }: { label: string; value: string; required?: boolean; icon?: React.ReactNode }) => (
  <Row $h={35}>
    <Label>{label} {required && <span>*</span>}</Label>
    <LinkValue $tight={Boolean(icon)}>{icon || <Ball />}<span>{value}</span></LinkValue>
  </Row>
);

const FieldRow = ({ label, value, w, right }: { label: string; value: string; w: number; right?: boolean }) => (
  <Row $h={41}>
    <Label>{label} <span>*</span></Label>
    <Field $w={w} $right={right} value={value} readOnly />
  </Row>
);

export default function App() {
  return (
    <Page>
      <GlobalStyle />
      <Header>
        <Brand>Transport Planner</Brand>
        <Nav>
          <NavItem $w={132}>TRANSPORT DEMANDS</NavItem>
          <NavItem $w={179}>LOGISTIC SERVICE PROVIDERS</NavItem>
          <NavItem $w={49}>SYSTEM</NavItem>
        </Nav>
      </Header>
      <Crumbs>
        <Crumb><Ship w={15} />2013-03-02 FISKARSTRAND -&gt; ROTTERDAM</Crumb>
        <Ban />
      </Crumbs>
      <TitleBar>
        <Title><Ship w={32} />2013-03-02 Fiskarstrand -&gt; Rotterdam</Title>
        <Actions>
          <ActionButton $w={83}>SIMILAR TO</ActionButton>
          <ActionButton $w={70}>COST PIE</ActionButton>
          <ActionButton $w={122}>RESOURCE USAGE</ActionButton>
          <ActionButton $w={89}>SEND EVENT</ActionButton>
          <ActionButton $w={140}>RE-PLAN TRANSPORT</ActionButton>
        </Actions>
      </TitleBar>
      <Columns>
        <Panel $h={711} $top={17}>
          <Heading>General</Heading>
          <LinkRow label="CARGO" value="Dried fish" />
          <LinkRow label="TRANSPORT PATH" value="Fiskarstrand-Ålesund (Hoel Transport) (W) (L)-Rotterdam (NCL)" icon={<ClockCheck />} />
          <Heading>Pickup</Heading>
          <LinkRow label="PICKUP" value="Happy Salmon Company, Fiskarstrand" required />
          <FieldRow label="PICKUP DATE" value="02-03-2013" w={170} />
          <FieldRow label="PICKUP TIME" value="12:00 PM" w={134} />
          <FieldRow label="INTERVAL [H]" value="0" w={143} right />
          <Heading $gap={1}>Delivery</Heading>
          <LinkRow label="DELIVERY" value="Fish&Chips, Rotterdam" required />
          <FieldRow label="DELIVERY DATE" value="12-03-2013" w={170} />
          <FieldRow label="DELIVERY TIME" value="12:00 PM" w={134} />
          <FieldRow label="INTERVAL [H]" value="0" w={143} right />
          <Heading>Notes</Heading>
          <Row $h={125}>
            <Label>NOTES</Label>
            <Notes value="fishy fish" readOnly />
          </Row>
          <EditButton>EDIT</EditButton>
        </Panel>
        <RightColumn>
          <Panel $h={228} $top={17}>
            <PanelHead>
              <Heading>Schedule</Heading>
              <Toggle>
                <ToggleItem><Eye /></ToggleItem>
                <ToggleItem $on><ListIcon /></ToggleItem>
                <ToggleItem />
              </Toggle>
            </PanelHead>
            <TableRow $kind="head">
              {HEADINGS.map((h) => <HeadCell key={h}>{h}</HeadCell>)}
            </TableRow>
            {SCHEDULE.map(([name, price, time, provider, type], i) => (
              <TableRow key={name} $kind={i % 2 ? 'alt' : undefined}>
                <Cell $bold $pad={13}>{name}</Cell>
                <NumberCell>{price}</NumberCell>
                <Cell>BOOKED</Cell>
                <Cell />
                <NumberCell>{time}</NumberCell>
                <Cell $bold $pad={7}><Ball />{provider}</Cell>
                <Cell>{type}</Cell>
              </TableRow>
            ))}
          </Panel>
          <Panel $h={480} $top={17}>
            <PanelHead>
              <Heading $line={30}>Waypoints</Heading>
              <Toggle>
                <ToggleItem><Eye /></ToggleItem>
                <ToggleItem $on><GlobeIcon /></ToggleItem>
                <ToggleItem><ListIcon /></ToggleItem>
              </Toggle>
            </PanelHead>
            <MapFrame>
              <EuropeMap />
              <MapType><b>Map</b><span>Satellite</span></MapType>
              <Attribution>Map data ©2013 Basarsoft, Google, ORION-ME - <b>Terms of Use</b></Attribution>
            </MapFrame>
          </Panel>
        </RightColumn>
      </Columns>
      <Footer>POWERED BY: <a>APACHE ISIS</a></Footer>
      <DebugLink>WICKET AJAX DEBUG</DebugLink>
    </Page>
  );
}
